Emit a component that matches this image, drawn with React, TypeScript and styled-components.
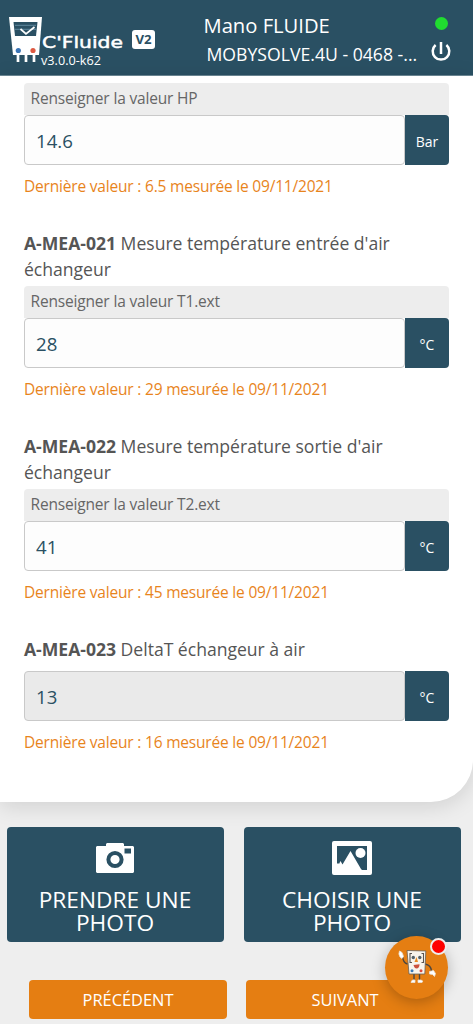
import React from 'react';
import styled, { createGlobalStyle } from 'styled-components';

const GlobalStyle = createGlobalStyle`
  *, *::before, *::after { box-sizing: border-box; }
  html, body { margin: 0; padding: 0; background: #eee; }
  body { font-family: 'Open Sans', 'Noto Sans', sans-serif; color: #555; overflow: hidden; }
  button, input { font-family: inherit; margin: 0; }
`;

const NAVY = '#2a5063';
const ORANGE = '#e57e12';

const Screen = styled.div`
  position: relative;
  width: 473px;
  height: 1024px;
  overflow: hidden;
  background: #eee;
`;
const Header = styled.header`
  display: flex;
  height: 76px;
  background: ${NAVY};
  border-bottom: 1px solid #6d8996;
  color: #fff;
`;
const Brand = styled.div`
  display: flex;
  width: 200px;
  padding: 16px 0 0 9px;
`;
const BrandText = styled.div`
  display: flex;
  flex-direction: column;
  margin-top: 18px;
`;
const Version = styled.span`
  font-size: 12.7px;
  line-height: 16px;
  margin: 0 0 0 -1px;
`;
const VersionTag = styled.span`
  width: 23px;
  height: 19px;
  margin: 14px 0 0 8px;
  border-radius: 3px;
  background: #fff;
  color: ${NAVY};
  font-size: 13.2px;
  font-weight: 700;
  line-height: 19px;
  text-align: center;
`;
const Account = styled.div`
  display: flex;
  flex-direction: column;
  width: 228px;
  padding-top: 11px;
  white-space: nowrap;
`;
const UserName = styled.div`
  padding-left: 3.5px;
  font-size: 20.2px;
  line-height: 29px;
`;
const Site = styled.div`
  padding-left: 6.5px;
  font-size: 17.65px;
  line-height: 28px;
`;
const Status = styled.div`
  display: flex;
  flex-direction: column;
  align-items: center;
  width: 26px;
  padding-top: 17px;
`;
const Online = styled.span`
  width: 13px;
  height: 13px;
  border-radius: 50%;
  background: #20dc30;
`;
const Card = styled.main`
  height: 726px;
  padding: 7px 24px 0;
  background: #fff;
  border-radius: 0 0 42px 0;
  box-shadow: 0 4px 22px rgba(0, 0, 0, 0.13);
`;
const Measure = styled.section<{ $compact?: boolean }>`
  display: flex;
  flex-direction: column;
  margin-bottom: ${(p) => (p.$compact ? '0' : '33px')};
`;
const Title = styled.h2<{ $gap?: number }>`
  margin: 0 0 ${(p) => p.$gap ?? 4}px;
  font-size: 17.6px;
  letter-spacing: -0.02px;
  font-weight: 400;
  line-height: 26px;
`;
const Label = styled.label`
  height: 32px;
  padding-left: 6.5px;
  border-radius: 4px 4px 0 0;
  background: #ededed;
  font-size: 15.5px;
  letter-spacing: -0.17px;
  line-height: 30px;
  color: #666;
`;
const InputGroup = styled.div`
  display: flex;
  height: 50px;
`;
const Input = styled.input`
  width: 381px;
  height: 50px;
  padding: 1px 11px 0;
  border: 1px solid #c9c9c9;
  border-radius: 4px;
  background: #fdfdfd;
  color: ${NAVY};
  font-size: 18.6px;
  outline: none;
  &:disabled { background: #eaeaea; opacity: 1; }
`;
const Unit = styled.span`
  display: flex;
  align-items: center;
  justify-content: center;
  width: 44px;
  padding-top: 2px;
  border-radius: 0 4px 4px 0;
  background: ${NAVY};
  color: #fff;
  font-size: 14px;
`;
const Previous = styled.p`
  height: 22px;
  margin: 10px 0 0;
  color: #e8841c;
  font-size: 15.5px;
  letter-spacing: -0.19px;
  line-height: 22px;
  white-space: nowrap;
`;
const PhotoActions = styled.div`
  display: flex;
  gap: 20px;
  padding: 25px 0 0 6.5px;
`;
const PhotoButton = styled.button`
  display: flex;
  flex-direction: column;
  align-items: center;
  width: 217px;
  height: 115px;
  padding: 14px 20px 0;
  border: 0;
  border-radius: 4px;
  background: ${NAVY};
  color: #fff;
  font-size: 22.7px;
  line-height: 23px;
  svg { flex: none; margin-bottom: 13px; }
`;
const Steps = styled.nav`
  display: flex;
  gap: 19px;
  padding: 38px 0 0 29px;
`;
const StepButton = styled.button`
  width: 198px;
  height: 39px;
  padding: 0 0 1px;
  border: 0;
  border-radius: 4px;
  background: ${ORANGE};
  color: #fff;
  font-size: 16.4px;
`;
const Assistant = styled.button`
  position: absolute;
  left: 385px;
  top: 936px;
  width: 63px;
  height: 63px;
  padding: 0;
  border: 0;
  border-radius: 50%;
  background: ${ORANGE};
  box-shadow: 0 3px 14px rgba(0, 0, 0, 0.25);
  svg { display: block; }
`;
const Alert = styled.span`
  position: absolute;
  left: 45px;
  top: 2px;
  width: 17px;
  height: 17px;
  border: 2px solid #eee;
  border-radius: 50%;
  background: #f00;
`;
const PowerSvg = styled.svg`
  margin-top: 11px;
`;

const GaugeLogo = () => (
  <svg width="33" height="47" viewBox="0 0 33 47">
    <path d="M0 1h33l-3 38H4z" fill="#fff" />
    <path d="M4.500 6h24l-1.500 14H6z" fill={NAVY} />
    <path d="M6 9.300h21M6 13.300h21" stroke="#6e98ad" strokeWidth=".8" />
    <path d="M11.500 13l5.500 5 8.500-7" fill="none" stroke="#fff" strokeWidth="1.700" />
    <circle cx="9.300" cy="34.500" r="2.600" fill="#3c75b5" />
    <circle cx="24" cy="34.500" r="2.600" fill="#de5a42" />
    <path d="M9 39v7M17 39v7M25 39v7" stroke="#fff" strokeWidth="2.700" />
  </svg>
);
const Wordmark = () => (
  <svg width="82" height="18" viewBox="0 0 82 18">
    <text x="0" y="14" textLength="81" lengthAdjust="spacingAndGlyphs" fill="#fff" stroke="#fff" strokeWidth=".45"
      fontFamily="DejaVu Sans, sans-serif" fontSize="15.2">C'Fluide</text>
  </svg>
);
const PowerIcon = () => (
  <PowerSvg width="22" height="22" viewBox="0 0 22 22" fill="none" stroke="#fff" strokeWidth="2.500">
    <path d="M5.600 4A8.300 8.300 0 1 0 16.400 4M11 1v12" />
  </PowerSvg>
);
const CameraIcon = () => (
  <svg width="38" height="34" viewBox="0 0 38 34">
    <path fill="#fff" fillRule="evenodd" d="M10 3l1-1h16l1 1v2h9l1 1v25l-1 1H1l-1-1V6l1-1h9zM28.500 7.500v5H35v-5z" />
    <circle cx="19" cy="18.500" r="6.600" fill="#fff" stroke={NAVY} strokeWidth="4" />
  </svg>
);
const PictureIcon = () => (
  <svg width="40" height="34" viewBox="0 0 40 34">
    <rect width="40" height="34" rx="2" fill="#fff" />
    <path d="M5 5h30v24H5z" fill={NAVY} />
    <path d="M5 30v-7l1-1 1 1 1.500-3 2 3.500L18.500 10 29 28l1 1h5v1z" fill="#fff" />
    <circle cx="28.500" cy="12" r="5" fill="#fff" />
  </svg>
);
const Mascot = () => (
  <svg width="63" height="63" viewBox="0 0 63 63" fill="none">
    <path d="M22.500 28Q18 27 17.500 20M40 28q6 1 6.500 7M29 38v6M34.500 38v6" stroke="#4b4640" strokeWidth="1.400" />
    <path d="M22 14.500l18.800.5-1 23H24z" fill="#f8f4ec" stroke="#665f58" strokeWidth=".8" />
    <path d="M27 17.500h-2v9h2M36.500 17.500h2v9h-2" stroke="#5a5450" strokeWidth="1.100" />
    <circle cx="28.300" cy="21.500" r="1.700" fill="#53616a" />
    <circle cx="34.800" cy="21.500" r="1.700" fill="#53616a" />
    <path d="M31.500 21l-2 5h3.500z" fill="#e98a20" />
    <path d="M28.500 29l6-.8q0 4-3 4.300-2 0-3-3.500z" fill="#cb513d" />
    <circle cx="27" cy="34.800" r="1.500" fill="#3979b8" />
    <circle cx="36" cy="34.800" r="1.500" fill="#df493b" />
    <path d="M15 21q-2-3-.5-6l2 1 1 1.500 1 3-1.500 2zM44.500 35.500l4-1 2 3-1 3-2-2-3-.5zM26 46q1-3 4-2v2.500h-4zM33 44h3q3 1 1 2.500h-4z" fill="#fff" stroke="#eadfd2" strokeWidth=".8" />
  </svg>
);

interface FieldProps {
  code?: string;
  name?: string;
  label?: string;
  value: string;
  unit: string;
  previous: string;
  computed?: boolean;
}
const Field = ({ code, name, label, value, unit, previous, computed }: FieldProps) => (
  <Measure $compact={computed}>
    {code && <Title $gap={computed ? 9 : 4}><b>{code}</b> {name}</Title>}
    {label && <Label>{label}</Label>}
    <InputGroup>
      <Input defaultValue={value} disabled={computed} />
      <Unit>{unit}</Unit>
    </InputGroup>
    <Previous>{previous}</Previous>
  </Measure>
);

export default function App() {
  return (
    <Screen>
      <GlobalStyle />
      <Header>
        <Brand>
          <GaugeLogo />
          <BrandText><Wordmark /><Version>v3.0.0-k62</Version></BrandText>
          <VersionTag>V2</VersionTag>
        </Brand>
        <Account>
          <UserName>Mano FLUIDE</UserName>
          <Site>MOBYSOLVE.4U - 0468 -...</Site>
        </Account>
        <Status><Online /><PowerIcon /></Status>
      </Header>
      <Card>
        <Field label="Renseigner la valeur HP" value="14.6" unit="Bar" previous="Dernière valeur : 6.5 mesurée le 09/11/2021" />
        <Field code="A-MEA-021" name="Mesure température entrée d'air échangeur" label="Renseigner la valeur T1.ext" value="28" unit="°C" previous="Dernière valeur : 29 mesurée le 09/11/2021" />
        <Field code="A-MEA-022" name="Mesure température sortie d'air échangeur" label="Renseigner la valeur T2.ext" value="41" unit="°C" previous="Dernière valeur : 45 mesurée le 09/11/2021" />
        <Field code="A-MEA-023" name="DeltaT échangeur à air" value="13" unit="°C" previous="Dernière valeur : 16 mesurée le 09/11/2021" computed />
      </Card>
      <PhotoActions>
        <PhotoButton><CameraIcon />PRENDRE UNE PHOTO</PhotoButton>
        <PhotoButton><PictureIcon />CHOISIR UNE PHOTO</PhotoButton>
      </PhotoActions>
      <Steps>
        <StepButton>PRÉCÉDENT</StepButton>
        <StepButton>SUIVANT</StepButton>
      </Steps>
      <Assistant aria-label="Assistant"><Mascot /><Alert /></Assistant>
    </Screen>
  );
}
